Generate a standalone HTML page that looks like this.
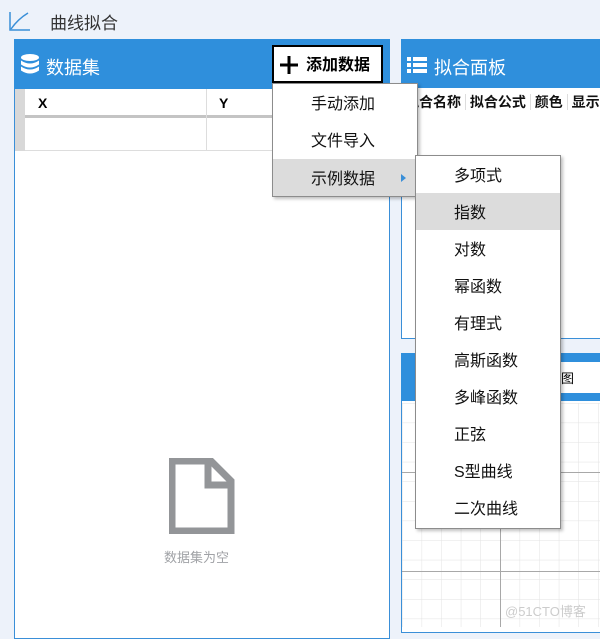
<!DOCTYPE html><html><head><meta charset="utf-8"><style>
*{margin:0;padding:0;box-sizing:border-box}
body{width:600px;height:627px;overflow:hidden;background:#edf2fa;font-family:"Liberation Sans","Noto Sans CJK SC",sans-serif;position:relative}
.a{position:absolute}
.hdr{background:#2f8fdc;color:#fff;font-size:17px}
.menu{background:#fff;border:1px solid #8c8c8c;box-shadow:2px 2px 3px rgba(0,0,0,.25)}
.mi{height:37px;line-height:41px;font-size:16px;color:#111}
</style></head><body>
<svg class="a" style="left:8px;top:10px" width="24" height="22"><path d="M2 2V20H22" stroke="#3a8fd8" stroke-width="1.5" fill="none"/><path d="M3 19Q10 9 20 3" stroke="#3a8fd8" stroke-width="1.5" fill="none"/></svg>
<div class="a" style="left:50px;top:9px;font-size:17px;color:#333">曲线拟合</div>

<div class="a" style="left:14px;top:39px;width:376px;height:600px;background:#fff;border:1px solid #3a8fd8"></div>
<div class="a hdr" style="left:14px;top:39px;width:376px;height:50px"></div>
<svg class="a" style="left:20px;top:54px" width="20" height="22"><ellipse cx="10" cy="3.5" rx="9" ry="3.5" fill="#fff"/><path d="M1 6.5q9 6 18 0v4q-9 6-18 0z M1 12.5q9 6 18 0v4q-9 6-18 0z" fill="#fff"/></svg>
<div class="a" style="left:46px;top:54px;font-size:18px;color:#fff">数据集</div>
<div class="a" style="left:272px;top:45px;width:111px;height:38px;background:#fff;border:2px solid #000;font-size:16px;font-weight:bold;line-height:38px;padding-left:32px">添加数据</div>
<svg class="a" style="left:279px;top:55px" width="20" height="20"><path d="M10 1V19M1 10H19" stroke="#000" stroke-width="3"/></svg>
<div class="a" style="left:15px;top:89px;width:374px;height:29px;background:#fff;border-bottom:3px solid #c4c4c4"></div>
<div class="a" style="left:15px;top:89px;width:10px;height:62px;background:#d8d8d8"></div>
<div class="a" style="left:25px;top:119px;width:364px;height:32px;border-bottom:1px solid #ddd"></div>
<div class="a" style="left:206px;top:89px;width:1px;height:62px;background:#ddd"></div>
<div class="a" style="left:38px;top:95px;font-size:14px;font-weight:bold">X</div>
<div class="a" style="left:219px;top:95px;font-size:14px;font-weight:bold">Y</div>
<svg class="a" style="left:169px;top:458px" width="66" height="76"><path d="M3 3H42L62 23V73H3Z" fill="none" stroke="#939598" stroke-width="7"/><path d="M39 3V27H62" fill="none" stroke="#939598" stroke-width="7"/></svg>
<div class="a" style="left:164px;top:547px;font-size:13px;color:#a0a2a6">数据集为空</div>

<div class="a" style="left:401px;top:39px;width:210px;height:300px;background:#fff;border:1px solid #3a8fd8"></div>
<div class="a hdr" style="left:401px;top:39px;width:210px;height:49px"></div>
<svg class="a" style="left:407px;top:56px" width="20" height="18"><path d="M0 1h4v4H0zM6 1h14v4H6zM0 7h4v4H0zM6 7h14v4H6zM0 13h4v4H0zM6 13h14v4H6z" fill="#fff"/></svg>
<div class="a" style="left:434px;top:54px;font-size:18px;color:#fff">拟合面板</div>
<div class="a" style="left:405px;top:92px;font-size:14px;font-weight:bold;white-space:nowrap;color:#111">拟合名称 <span style="border-left:1px solid #ddd;padding-left:4px">拟合公式</span> <span style="border-left:1px solid #ddd;padding-left:4px">颜色</span> <span style="border-left:1px solid #ddd;padding-left:4px">显示</span></div>

<div class="a" style="left:401px;top:353px;width:210px;height:280px;background:#fff;border:1px solid #3a8fd8"></div>
<div class="a hdr" style="left:401px;top:353px;width:210px;height:48px"></div>
<div class="a" style="left:540px;top:362px;width:70px;height:31px;background:#fff;font-size:13px;line-height:33px;padding-left:8px">线图</div>
<svg class="a" style="left:402px;top:403px" width="198" height="224">
<defs><pattern id="g" width="19.6" height="19.6" patternUnits="userSpaceOnUse"><path d="M0 0V20M0 0H20" stroke="#e2e2e2" stroke-width="1"/></pattern></defs>
<rect width="198" height="224" fill="url(#g)"/>
<path d="M98.5 0V224M0 69.5H198M0 168.5H198" stroke="#a8a8a8" stroke-width="1"/></svg>
<div class="a" style="left:505px;top:601px;font-size:13px;color:#ccc">@51CTO博客</div>

<div class="a menu" style="left:272px;top:83px;width:146px;height:114px"></div>
<div class="a mi" style="left:273px;top:84px;width:144px;padding-left:38px">手动添加</div>
<div class="a mi" style="left:273px;top:121px;width:144px;padding-left:38px">文件导入</div>
<div class="a mi" style="left:273px;top:159px;width:144px;padding-left:38px;background:#dcdcdc">示例数据</div>
<div class="a" style="left:401px;top:174px;width:0;height:0;border-left:5px solid #3a8fd8;border-top:4px solid transparent;border-bottom:4px solid transparent"></div>

<div class="a menu" style="left:415px;top:155px;width:146px;height:374px"></div>
<div class="a" style="left:416px;top:156px;width:144px">
<div class="mi" style="padding-left:38px">多项式</div>
<div class="mi" style="padding-left:38px;background:#dcdcdc">指数</div>
<div class="mi" style="padding-left:38px">对数</div>
<div class="mi" style="padding-left:38px">幂函数</div>
<div class="mi" style="padding-left:38px">有理式</div>
<div class="mi" style="padding-left:38px">高斯函数</div>
<div class="mi" style="padding-left:38px">多峰函数</div>
<div class="mi" style="padding-left:38px">正弦</div>
<div class="mi" style="padding-left:38px">S型曲线</div>
<div class="mi" style="padding-left:38px">二次曲线</div>
</div>
</body></html>
